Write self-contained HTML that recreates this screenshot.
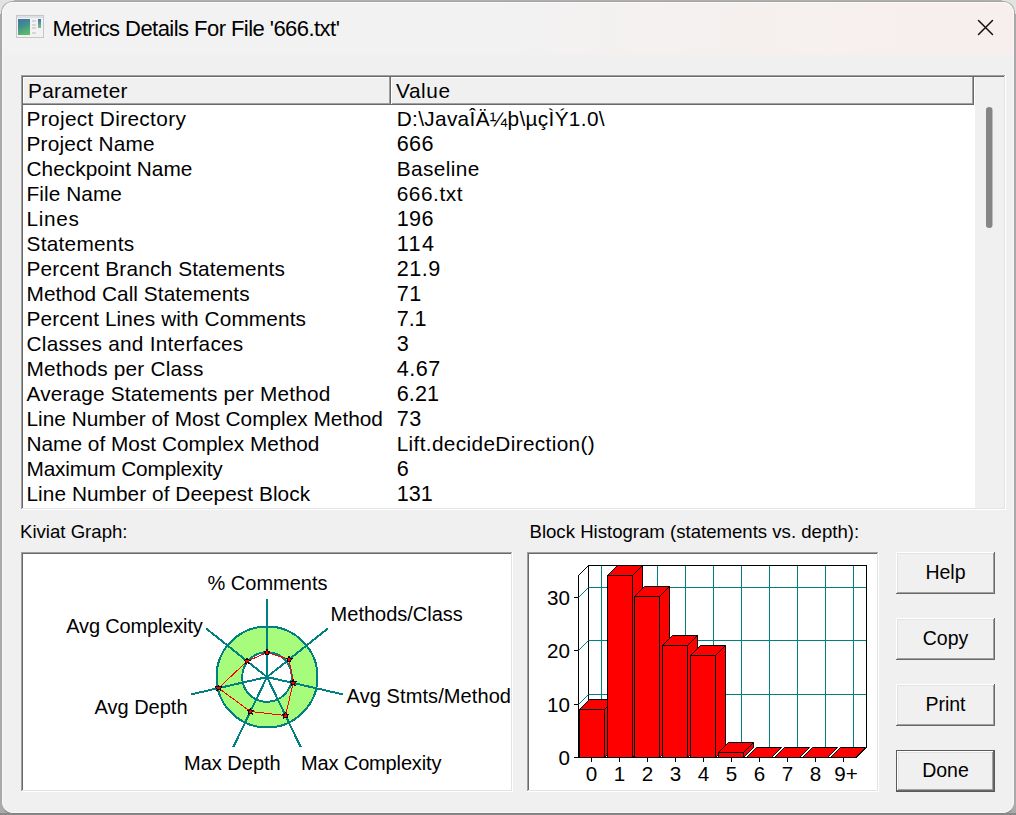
<!DOCTYPE html>
<html><head><meta charset="utf-8">
<style>
*{box-sizing:border-box}
html,body{margin:0;padding:0}
body{width:1016px;height:815px;overflow:hidden;position:relative;background:linear-gradient(180deg,#b2b2b2 0,#aaaaaa 2px,#aaaaaa 813px,#888888 813px);font-family:"Liberation Sans",sans-serif;color:#000}
.abs{position:absolute}
#win{position:absolute;left:1px;top:1px;width:1014px;height:813px;border-radius:12px;background:#f0f0f0;overflow:hidden;border:1px solid #a6a6a6;border-bottom-color:#808080}
#hl{position:absolute;left:0;top:0;width:1012px;height:811px;border-radius:11px;border:1px solid rgba(255,255,255,0.55)}
#title{position:absolute;left:0;top:0;width:1012px;height:53px;background:linear-gradient(90deg,#f2f2f2 0%,#f2f2f2 48%,#f6f0ee 80%,#f7efed 100%)}
.ttxt{position:absolute;left:52.5px;top:16.7px;font-size:22px;letter-spacing:-0.55px;white-space:nowrap;line-height:24px}
.row{position:absolute;height:25px;line-height:25px;font-size:20.8px;white-space:nowrap}
.hd{position:absolute;height:25px;line-height:25px;font-size:20.8px;white-space:nowrap}
.lab{position:absolute;white-space:nowrap;line-height:22px}
</style></head><body>
<div class="abs" style="left:0;top:0;width:14px;height:14px;background:#e2e2e2"></div><div class="abs" style="left:1002px;top:0;width:14px;height:14px;background:#e2e2e2"></div>
<div id="win">
  <div id="title"></div>
  <div id="hl"></div>
</div>
<svg class="abs" style="left:0;top:0" width="1016" height="815" viewBox="0 0 1016 815">
  <defs>
    <linearGradient id="ig" x1="0" y1="0" x2="0.35" y2="1"><stop offset="0" stop-color="#4270ad"/><stop offset="0.5" stop-color="#3f8f8c"/><stop offset="1" stop-color="#5db86a"/></linearGradient>
    <linearGradient id="ig2" x1="0" y1="0" x2="0" y2="1"><stop offset="0" stop-color="#4270ad"/><stop offset="1" stop-color="#7cc08a"/></linearGradient>
  </defs>
  <!-- icon -->
  <g shape-rendering="crispEdges">
    <rect x="16" y="15" width="28" height="23" fill="#c6c6c6"/>
    <rect x="17" y="16" width="26" height="21" fill="#f2f2f2"/>
    <rect x="17" y="16" width="26" height="2" fill="#dde1e6"/>
    <rect x="18" y="19" width="12" height="16" fill="url(#ig)"/>
    <rect x="32" y="20" width="4" height="2" fill="#d6d6d6"/>
    <rect x="32" y="24" width="4" height="2" fill="#d6d6d6"/>
    <rect x="32" y="27" width="4" height="2" fill="#d6d6d6"/>
    <rect x="32" y="32" width="4" height="2" fill="#d6d6d6"/>
    <rect x="38" y="19" width="3" height="9" fill="url(#ig2)"/>
  </g>
  <!-- close X -->
  <path d="M978.5 20.5 L992.5 34.5 M992.5 20.5 L978.5 34.5" stroke="#111" stroke-width="1.45" stroke-linecap="round" fill="none"/>

  <g shape-rendering="crispEdges">
  <rect x="21" y="75" width="985" height="435" fill="#ffffff"/>
  <rect x="21" y="75" width="984" height="1" fill="#a0a0a0"/>
  <rect x="21" y="75" width="1" height="434" fill="#a0a0a0"/>
  <rect x="22" y="76" width="982" height="1" fill="#696969"/>
  <rect x="22" y="76" width="1" height="432" fill="#696969"/>
  <rect x="1004" y="76" width="1" height="433" fill="#e3e3e3"/>
  <rect x="22" y="508" width="983" height="1" fill="#e3e3e3"/>
  <!-- scrollbar track -->
  <rect x="975" y="77" width="29" height="431" fill="#f0f0f0"/>
  <!-- header -->
  <rect x="23" y="77" width="951" height="28" fill="#f0f0f0"/>
  <rect x="23" y="77" width="367" height="1" fill="#ffffff"/>
  <rect x="23" y="77" width="1" height="27" fill="#ffffff"/>
  <rect x="23" y="103" width="951" height="1" fill="#a0a0a0"/>
  <rect x="23" y="104" width="951" height="1" fill="#696969"/>
  <rect x="389" y="77" width="1" height="27" fill="#a0a0a0"/>
  <rect x="390" y="77" width="1" height="28" fill="#696969"/>
  <rect x="391" y="77" width="582" height="1" fill="#ffffff"/>
  <rect x="391" y="77" width="1" height="27" fill="#ffffff"/>
  <rect x="972" y="77" width="1" height="27" fill="#a0a0a0"/>
  <rect x="973" y="77" width="1" height="28" fill="#696969"/>
  </g>
  <!-- scroll thumb -->
  <rect x="986" y="107" width="6.5" height="121" rx="3.2" fill="#858585"/>

  <g shape-rendering="crispEdges">
  <rect x="21" y="552" width="492" height="240" fill="#ffffff"/>
  <rect x="21" y="552" width="491" height="1" fill="#a0a0a0"/>
  <rect x="21" y="552" width="1" height="239" fill="#a0a0a0"/>
  <rect x="22" y="553" width="489" height="1" fill="#696969"/>
  <rect x="22" y="553" width="1" height="237" fill="#696969"/>
  <rect x="511" y="553" width="1" height="238" fill="#e3e3e3"/>
  <rect x="22" y="790" width="490" height="1" fill="#e3e3e3"/>
  <rect x="527" y="552" width="352" height="240" fill="#ffffff"/>
  <rect x="527" y="552" width="351" height="1" fill="#a0a0a0"/>
  <rect x="527" y="552" width="1" height="239" fill="#a0a0a0"/>
  <rect x="528" y="553" width="349" height="1" fill="#696969"/>
  <rect x="528" y="553" width="1" height="237" fill="#696969"/>
  <rect x="877" y="553" width="1" height="238" fill="#e3e3e3"/>
  <rect x="528" y="790" width="350" height="1" fill="#e3e3e3"/>
  </g>

  <g shape-rendering="crispEdges">
    <rect x="896" y="552" width="99" height="42" fill="#696969"/>
    <rect x="896" y="552" width="98" height="41" fill="#ffffff"/>
    <rect x="897" y="553" width="97" height="40" fill="#a0a0a0"/>
    <rect x="897" y="553" width="96" height="39" fill="#e3e3e3"/>
    <rect x="898" y="554" width="95" height="38" fill="#f0f0f0"/>
    </g>
  <text x="945.5" y="579" text-anchor="middle" font-size="19.5" font-family="Liberation Sans">Help</text>
  <g shape-rendering="crispEdges">
    <rect x="896" y="618" width="99" height="42" fill="#696969"/>
    <rect x="896" y="618" width="98" height="41" fill="#ffffff"/>
    <rect x="897" y="619" width="97" height="40" fill="#a0a0a0"/>
    <rect x="897" y="619" width="96" height="39" fill="#e3e3e3"/>
    <rect x="898" y="620" width="95" height="38" fill="#f0f0f0"/>
    </g>
  <text x="945.5" y="645" text-anchor="middle" font-size="19.5" font-family="Liberation Sans">Copy</text>
  <g shape-rendering="crispEdges">
    <rect x="896" y="684" width="99" height="42" fill="#696969"/>
    <rect x="896" y="684" width="98" height="41" fill="#ffffff"/>
    <rect x="897" y="685" width="97" height="40" fill="#a0a0a0"/>
    <rect x="897" y="685" width="96" height="39" fill="#e3e3e3"/>
    <rect x="898" y="686" width="95" height="38" fill="#f0f0f0"/>
    </g>
  <text x="945.5" y="711" text-anchor="middle" font-size="19.5" font-family="Liberation Sans">Print</text>
  <g shape-rendering="crispEdges">
    <rect x="896" y="750" width="99" height="42" fill="#5a5a5a"/>
    <rect x="897" y="751" width="97" height="40" fill="#696969"/>
    <rect x="897" y="751" width="96" height="39" fill="#ffffff"/>
    <rect x="898" y="752" width="95" height="38" fill="#a0a0a0"/>
    <rect x="898" y="752" width="94" height="37" fill="#e3e3e3"/>
    <rect x="899" y="753" width="93" height="36" fill="#f0f0f0"/>
    </g>
  <text x="945.5" y="777" text-anchor="middle" font-size="19.5" font-family="Liberation Sans">Done</text>

  <!-- kiviat -->
  <g>
    <circle cx="267" cy="677" r="50.5" fill="#a8fc7c" stroke="#008080" stroke-width="2" shape-rendering="crispEdges"/>
    <circle cx="267" cy="677" r="24.8" fill="#ffffff" stroke="#008080" stroke-width="2" shape-rendering="crispEdges"/>
    <path d="M267.0 677.0L267.0 599.0M267.0 677.0L328.0 628.4M267.0 677.0L343.0 694.4M267.0 677.0L300.8 747.3M267.0 677.0L233.2 747.3M267.0 677.0L191.0 694.4M267.0 677.0L206.0 628.4" stroke="#008080" stroke-width="2" fill="none" shape-rendering="crispEdges"/>
    <polygon points="267.0,652.5 289.1,659.4 293.2,683.0 285.5,715.5 250.4,711.5 218.5,688.1 247.1,661.2" fill="none" stroke="#ff0000" stroke-width="1" shape-rendering="crispEdges"/>
    <polygon points="267.0,648.9 266.1,651.3 263.6,651.4 265.6,653.0 264.9,655.4 267.0,654.0 269.1,655.4 268.4,653.0 270.4,651.4 267.9,651.3" fill="#ff0000" stroke="#000" stroke-width="0.9" shape-rendering="crispEdges"/>
    <polygon points="289.1,655.8 288.2,658.1 285.7,658.2 287.7,659.8 287.0,662.3 289.1,660.9 291.2,662.3 290.6,659.8 292.5,658.2 290.0,658.1" fill="#ff0000" stroke="#000" stroke-width="0.9" shape-rendering="crispEdges"/>
    <polygon points="293.2,679.4 292.3,681.8 289.8,681.9 291.8,683.4 291.1,685.9 293.2,684.5 295.3,685.9 294.7,683.4 296.6,681.9 294.1,681.8" fill="#ff0000" stroke="#000" stroke-width="0.9" shape-rendering="crispEdges"/>
    <polygon points="285.5,711.9 284.6,714.3 282.1,714.4 284.1,715.9 283.4,718.4 285.5,717.0 287.6,718.4 287.0,715.9 289.0,714.4 286.4,714.3" fill="#ff0000" stroke="#000" stroke-width="0.9" shape-rendering="crispEdges"/>
    <polygon points="250.4,707.9 249.5,710.3 247.0,710.4 249.0,712.0 248.3,714.4 250.4,713.0 252.5,714.4 251.8,712.0 253.8,710.4 251.3,710.3" fill="#ff0000" stroke="#000" stroke-width="0.9" shape-rendering="crispEdges"/>
    <polygon points="218.5,684.5 217.7,686.8 215.1,686.9 217.1,688.5 216.4,691.0 218.5,689.6 220.7,691.0 220.0,688.5 222.0,686.9 219.4,686.8" fill="#ff0000" stroke="#000" stroke-width="0.9" shape-rendering="crispEdges"/>
    <polygon points="247.1,657.6 246.3,659.9 243.7,660.1 245.7,661.6 245.0,664.1 247.1,662.7 249.3,664.1 248.6,661.6 250.6,660.1 248.0,659.9" fill="#ff0000" stroke="#000" stroke-width="0.9" shape-rendering="crispEdges"/>
  </g>

  <g shape-rendering="crispEdges">
  <rect x="601" y="565" width="1" height="182" fill="#008080"/>
  <rect x="629" y="565" width="1" height="182" fill="#008080"/>
  <rect x="657" y="565" width="1" height="182" fill="#008080"/>
  <rect x="685" y="565" width="1" height="182" fill="#008080"/>
  <rect x="713" y="565" width="1" height="182" fill="#008080"/>
  <rect x="741" y="565" width="1" height="182" fill="#008080"/>
  <rect x="769" y="565" width="1" height="182" fill="#008080"/>
  <rect x="797" y="565" width="1" height="182" fill="#008080"/>
  <rect x="825" y="565" width="1" height="182" fill="#008080"/>
  <rect x="853" y="565" width="1" height="182" fill="#008080"/>
  <rect x="588" y="694" width="278" height="1" fill="#008080"/>
  <rect x="588" y="640" width="278" height="1" fill="#008080"/>
  <rect x="588" y="587" width="278" height="1" fill="#008080"/>
  <rect x="588" y="565" width="279" height="1" fill="#000"/>
  <rect x="866" y="565" width="1" height="183" fill="#000"/>
  <rect x="588" y="565" width="1" height="183" fill="#000"/>
  <rect x="578" y="575" width="1" height="183" fill="#000"/>
  <rect x="574" y="757" width="283" height="1" fill="#000"/>
  <rect x="574" y="757" width="4" height="1" fill="#000"/>
  <rect x="574" y="704" width="4" height="1" fill="#000"/>
  <rect x="574" y="650" width="4" height="1" fill="#000"/>
  <rect x="574" y="597" width="4" height="1" fill="#000"/>
  <rect x="591" y="758" width="1" height="4" fill="#000"/>
  <rect x="619" y="758" width="1" height="4" fill="#000"/>
  <rect x="647" y="758" width="1" height="4" fill="#000"/>
  <rect x="675" y="758" width="1" height="4" fill="#000"/>
  <rect x="703" y="758" width="1" height="4" fill="#000"/>
  <rect x="731" y="758" width="1" height="4" fill="#000"/>
  <rect x="759" y="758" width="1" height="4" fill="#000"/>
  <rect x="787" y="758" width="1" height="4" fill="#000"/>
  <rect x="815" y="758" width="1" height="4" fill="#000"/>
  <rect x="843" y="758" width="1" height="4" fill="#000"/>
  </g>
  <path d="M578.5 704.5L588.5 694.5" stroke="#008080" stroke-width="1" fill="none"/>
  <path d="M578.5 650.5L588.5 640.5" stroke="#008080" stroke-width="1" fill="none"/>
  <path d="M578.5 597.5L588.5 587.5" stroke="#008080" stroke-width="1" fill="none"/>
  <path d="M578.5 575.5L588.5 565.5" stroke="#000" stroke-width="1" fill="none"/>
  <path d="M856.5 757.5L866.5 747.5" stroke="#000" stroke-width="1" fill="none"/>
  <polygon points="604.5,757.5 614.5,747.5 614.5,699.5 604.5,709.5" fill="#ff0000" stroke="#000" stroke-width="1"/>
  <polygon points="579.5,709.5 589.5,699.5 614.5,699.5 604.5,709.5" fill="#ff0000" stroke="#000" stroke-width="1"/>
  <rect x="579.5" y="709.5" width="25" height="48" fill="#ff0000" stroke="#000" stroke-width="1"/>
  <polygon points="632.5,757.5 642.5,747.5 642.5,565.5 632.5,575.5" fill="#ff0000" stroke="#000" stroke-width="1"/>
  <polygon points="607.5,575.5 617.5,565.5 642.5,565.5 632.5,575.5" fill="#ff0000" stroke="#000" stroke-width="1"/>
  <rect x="607.5" y="575.5" width="25" height="182" fill="#ff0000" stroke="#000" stroke-width="1"/>
  <polygon points="659.5,757.5 669.5,747.5 669.5,586.5 659.5,596.5" fill="#ff0000" stroke="#000" stroke-width="1"/>
  <polygon points="634.5,596.5 644.5,586.5 669.5,586.5 659.5,596.5" fill="#ff0000" stroke="#000" stroke-width="1"/>
  <rect x="634.5" y="596.5" width="25" height="161" fill="#ff0000" stroke="#000" stroke-width="1"/>
  <polygon points="687.5,757.5 697.5,747.5 697.5,635.5 687.5,645.5" fill="#ff0000" stroke="#000" stroke-width="1"/>
  <polygon points="662.5,645.5 672.5,635.5 697.5,635.5 687.5,645.5" fill="#ff0000" stroke="#000" stroke-width="1"/>
  <rect x="662.5" y="645.5" width="25" height="112" fill="#ff0000" stroke="#000" stroke-width="1"/>
  <polygon points="715.5,757.5 725.5,747.5 725.5,645.5 715.5,655.5" fill="#ff0000" stroke="#000" stroke-width="1"/>
  <polygon points="690.5,655.5 700.5,645.5 725.5,645.5 715.5,655.5" fill="#ff0000" stroke="#000" stroke-width="1"/>
  <rect x="690.5" y="655.5" width="25" height="102" fill="#ff0000" stroke="#000" stroke-width="1"/>
  <polygon points="743.5,757.5 753.5,747.5 753.5,742.5 743.5,752.5" fill="#ff0000" stroke="#000" stroke-width="1"/>
  <polygon points="718.5,752.5 728.5,742.5 753.5,742.5 743.5,752.5" fill="#ff0000" stroke="#000" stroke-width="1"/>
  <rect x="718.5" y="752.5" width="25" height="5" fill="#ff0000" stroke="#000" stroke-width="1"/>
  <polygon points="746.5,757.5 756.5,747.5 781.5,747.5 771.5,757.5" fill="#ff0000" stroke="#000" stroke-width="1"/>
  <polygon points="774.5,757.5 784.5,747.5 809.5,747.5 799.5,757.5" fill="#ff0000" stroke="#000" stroke-width="1"/>
  <polygon points="802.5,757.5 812.5,747.5 837.5,747.5 827.5,757.5" fill="#ff0000" stroke="#000" stroke-width="1"/>
  <polygon points="830.5,757.5 840.5,747.5 865.5,747.5 855.5,757.5" fill="#ff0000" stroke="#000" stroke-width="1"/>
  <text x="570" y="764.5" text-anchor="end" font-size="20.6" font-family="Liberation Sans">0</text>
  <text x="570" y="711.5" text-anchor="end" font-size="20.6" font-family="Liberation Sans">10</text>
  <text x="570" y="657.5" text-anchor="end" font-size="20.6" font-family="Liberation Sans">20</text>
  <text x="570" y="604.5" text-anchor="end" font-size="20.6" font-family="Liberation Sans">30</text>
  <text x="591.5" y="781" text-anchor="middle" font-size="20.6" font-family="Liberation Sans">0</text>
  <text x="619.5" y="781" text-anchor="middle" font-size="20.6" font-family="Liberation Sans">1</text>
  <text x="647.5" y="781" text-anchor="middle" font-size="20.6" font-family="Liberation Sans">2</text>
  <text x="675.5" y="781" text-anchor="middle" font-size="20.6" font-family="Liberation Sans">3</text>
  <text x="703.5" y="781" text-anchor="middle" font-size="20.6" font-family="Liberation Sans">4</text>
  <text x="731.5" y="781" text-anchor="middle" font-size="20.6" font-family="Liberation Sans">5</text>
  <text x="759.5" y="781" text-anchor="middle" font-size="20.6" font-family="Liberation Sans">6</text>
  <text x="787.5" y="781" text-anchor="middle" font-size="20.6" font-family="Liberation Sans">7</text>
  <text x="815.5" y="781" text-anchor="middle" font-size="20.6" font-family="Liberation Sans">8</text>
  <text x="846.0" y="781" text-anchor="middle" font-size="20.6" font-family="Liberation Sans">9+</text>
</svg>
<div class="ttxt">Metrics Details For File '666.txt'</div>
<div class="hd" style="left:28px;top:78px;letter-spacing:0.3px">Parameter</div>
<div class="hd" style="left:396px;top:78px;letter-spacing:0.6px">Value</div>
<div class="row" style="left:26.5px;top:105.5px;letter-spacing:0.350px">Project Directory</div><div class="row" style="left:396.7px;top:105.5px;letter-spacing:0.332px;font-size:20.8px">D:\JavaÎÄ¼þ\µçÌÝ1.0\</div>
<div class="row" style="left:26.5px;top:130.5px;letter-spacing:0.191px">Project Name</div><div class="row" style="left:396.7px;top:130.9px;letter-spacing:0.400px;font-size:21.6px">666</div>
<div class="row" style="left:26.5px;top:155.5px;letter-spacing:0.043px">Checkpoint Name</div><div class="row" style="left:396.7px;top:155.5px;letter-spacing:0.414px;font-size:20.8px">Baseline</div>
<div class="row" style="left:26.5px;top:180.5px;letter-spacing:0.075px">File Name</div><div class="row" style="left:396.7px;top:180.5px;letter-spacing:0.567px;font-size:20.8px">666.txt</div>
<div class="row" style="left:26.5px;top:205.5px;letter-spacing:0.650px">Lines</div><div class="row" style="left:396.7px;top:205.9px;letter-spacing:0.400px;font-size:21.6px">196</div>
<div class="row" style="left:26.5px;top:230.5px;letter-spacing:0.267px">Statements</div><div class="row" style="left:396.7px;top:230.9px;letter-spacing:1.400px;font-size:21.6px">114</div>
<div class="row" style="left:26.5px;top:255.5px;letter-spacing:0.167px">Percent Branch Statements</div><div class="row" style="left:396.7px;top:255.9px;letter-spacing:0.500px;font-size:21.6px">21.9</div>
<div class="row" style="left:26.5px;top:280.5px;letter-spacing:0.052px">Method Call Statements</div><div class="row" style="left:396.7px;top:280.9px;letter-spacing:0.500px;font-size:21.6px">71</div>
<div class="row" style="left:26.5px;top:305.5px;letter-spacing:0.123px">Percent Lines with Comments</div><div class="row" style="left:396.7px;top:305.9px;letter-spacing:-0.050px;font-size:21.6px">7.1</div>
<div class="row" style="left:26.5px;top:330.5px;letter-spacing:0.248px">Classes and Interfaces</div><div class="row" style="left:396.7px;top:330.9px;letter-spacing:1.000px;font-size:21.6px">3</div>
<div class="row" style="left:26.5px;top:355.5px;letter-spacing:0.219px">Methods per Class</div><div class="row" style="left:396.7px;top:355.9px;letter-spacing:0.500px;font-size:21.6px">4.67</div>
<div class="row" style="left:26.5px;top:380.5px;letter-spacing:0.171px">Average Statements per Method</div><div class="row" style="left:396.7px;top:380.9px;letter-spacing:0.100px;font-size:21.6px">6.21</div>
<div class="row" style="left:26.5px;top:405.5px;letter-spacing:0.012px">Line Number of Most Complex Method</div><div class="row" style="left:396.7px;top:405.9px;letter-spacing:0.500px;font-size:21.6px">73</div>
<div class="row" style="left:26.5px;top:430.5px;letter-spacing:0.019px">Name of Most Complex Method</div><div class="row" style="left:396.7px;top:430.5px;letter-spacing:0.348px;font-size:20.8px">Lift.decideDirection()</div>
<div class="row" style="left:26.5px;top:455.5px;letter-spacing:-0.147px">Maximum Complexity</div><div class="row" style="left:396.7px;top:455.9px;letter-spacing:1.000px;font-size:21.6px">6</div>
<div class="row" style="left:26.5px;top:480.5px;letter-spacing:0.056px">Line Number of Deepest Block</div><div class="row" style="left:396.7px;top:480.9px;letter-spacing:0.050px;font-size:21.6px">131</div>
<svg class="abs" style="left:0;top:0;overflow:visible" width="1" height="1"><text x="207.5" y="590" font-size="20" letter-spacing="0" font-family="Liberation Sans">% Comments</text></svg>
<svg class="abs" style="left:0;top:0;overflow:visible" width="1" height="1"><text x="330.6" y="620.8" font-size="20" letter-spacing="0" font-family="Liberation Sans">Methods/Class</text></svg>
<svg class="abs" style="left:0;top:0;overflow:visible" width="1" height="1"><text x="66.3" y="632.8" font-size="20" letter-spacing="-0.16" font-family="Liberation Sans">Avg Complexity</text></svg>
<svg class="abs" style="left:0;top:0;overflow:visible" width="1" height="1"><text x="346.6" y="702.5" font-size="20" letter-spacing="0.09" font-family="Liberation Sans">Avg Stmts/Method</text></svg>
<svg class="abs" style="left:0;top:0;overflow:visible" width="1" height="1"><text x="94.5" y="713.8" font-size="20" letter-spacing="0" font-family="Liberation Sans">Avg Depth</text></svg>
<svg class="abs" style="left:0;top:0;overflow:visible" width="1" height="1"><text x="184" y="770.4" font-size="20" letter-spacing="0" font-family="Liberation Sans">Max Depth</text></svg>
<svg class="abs" style="left:0;top:0;overflow:visible" width="1" height="1"><text x="301.1" y="770.4" font-size="20" letter-spacing="-0.15" font-family="Liberation Sans">Max Complexity</text></svg>
<svg class="abs" style="left:0;top:0;overflow:visible" width="1" height="1"><text x="20" y="538" font-size="18.6" letter-spacing="0" font-family="Liberation Sans">Kiviat Graph:</text></svg>
<svg class="abs" style="left:0;top:0;overflow:visible" width="1" height="1"><text x="529.5" y="538" font-size="18.6" letter-spacing="0" font-family="Liberation Sans">Block Histogram (statements vs. depth):</text></svg>
</body></html>
